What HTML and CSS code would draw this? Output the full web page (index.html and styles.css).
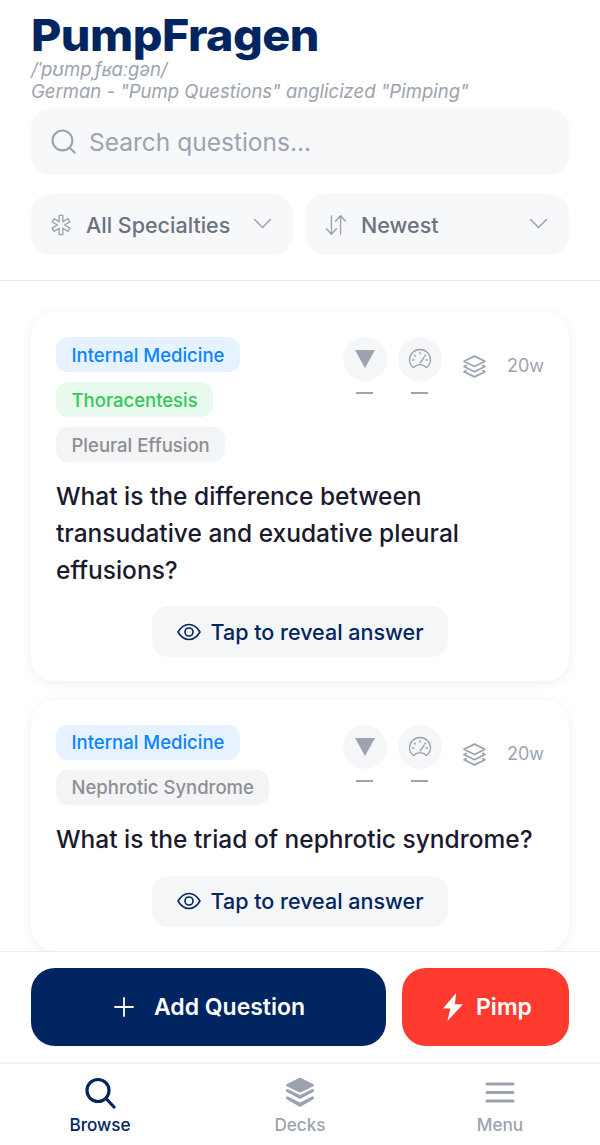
FILE: index.html
```html
<!DOCTYPE html>
<html lang="en">
<head>
    <meta charset="UTF-8">
    <meta name="viewport" content="width=device-width, initial-scale=1.0">
    <title>PumpFragen</title>
    <link rel="stylesheet" href="styles.css">
</head>
<body>
    <div class="app">
        <header class="top">
            <h1 class="logo">PumpFragen</h1>
            <p class="phonetic">/ˈpʊmpˌfʁaːɡən/</p>
            <p class="meaning">German - "Pump Questions" anglicized "Pimping"</p>

            <div class="search">
                <svg class="search-icon" viewBox="0 0 24 24" fill="none" stroke="currentColor" stroke-width="2" stroke-linecap="round"><circle cx="11" cy="11" r="9.500"/><path d="M18 18l4.800 4.800"/></svg>
                <span>Search questions...</span>
            </div>

            <div class="filters">
                <div class="filter">
                    <svg class="filter-icon" viewBox="0 0 24 24" fill="none" stroke="currentColor" stroke-width="1.500" stroke-linejoin="round"><path d="M10 1.500h4v7l5.500-3.500 2.200 3.500L15.900 12l5.800 3.500-2.200 3.500-5.500-3.500v7h-4v-7L4.500 19l-2.200-3.500L8.100 12 2.300 8.500 4.500 5 10 8.500z"/></svg>
                    <span class="filter-label">All Specialties</span>
                    <svg class="chevron" viewBox="0 0 24 24" fill="none" stroke="currentColor" stroke-width="2" stroke-linecap="round" stroke-linejoin="round"><path d="M2 7l10 10L22 7"/></svg>
                </div>
                <div class="filter">
                    <svg class="filter-icon" viewBox="0 0 24 24" fill="none" stroke="currentColor" stroke-width="1.500" stroke-linecap="round" stroke-linejoin="round"><path d="M7 2v20M1.500 16L7 22l5.500-6M17 22V2M11.500 8L17 2l5.500 6"/></svg>
                    <span class="filter-label">Newest</span>
                    <svg class="chevron" viewBox="0 0 24 24" fill="none" stroke="currentColor" stroke-width="2" stroke-linecap="round" stroke-linejoin="round"><path d="M2 7l10 10L22 7"/></svg>
                </div>
            </div>
        </header>

        <main class="feed">
            <article class="card">
                <div class="card-top">
                    <div class="tags">
                        <span class="tag tag-blue">Internal Medicine</span>
                        <span class="tag tag-green">Thoracentesis</span>
                        <span class="tag tag-gray">Pleural Effusion</span>
                    </div>
                    <div class="meta">
                        <div class="stat">
                            <div class="stat-circle"><svg class="triangle" viewBox="0 0 20 18"><path d="M0 0h20L10 18z"/></svg></div>
                            <div class="dash"></div>
                        </div>
                        <div class="stat">
                            <div class="stat-circle"><svg class="gauge" viewBox="0 0 24 24" fill="none" stroke="currentColor" stroke-width="1.300" stroke-linecap="round" stroke-linejoin="round"><path d="M5.500 20.500C3.200 18.800 1.500 16 1.500 13a10.500 10.500 0 0 1 21 0c0 3-1.700 5.800-4 7.500-1.800-1.800-4-2.800-6.500-2.800s-4.700 1-6.500 2.800z"/><path d="M12 16l4-5.500M12 5.500v1.500M6.500 8l1 1M4.500 13H6M19.500 13H18M17.500 8l-1 1"/></svg></div>
                            <div class="dash"></div>
                        </div>
                        <svg class="layers" viewBox="0 0 24 24" fill="none" stroke="currentColor" stroke-width="1.700" stroke-linejoin="round"><path d="M12 2l10 5-10 5L2 7z"/><path d="M4.500 10.500L2 12l10 5 10-5-2.500-1.500"/><path d="M4.500 15.500L2 17l10 5 10-5-2.500-1.500"/></svg>
                        <span class="words">20w</span>
                    </div>
                </div>
                <p class="question">What is the difference between transudative and exudative pleural effusions?</p>
                <button class="reveal">
                    <svg viewBox="0 0 24 24" fill="none" stroke="currentColor" stroke-width="1.600" stroke-linejoin="round"><path d="M1 12c3-5 6.700-7.500 11-7.500S20 7 23 12c-3 5-6.700 7.500-11 7.500S4 17 1 12z"/><circle cx="12" cy="12" r="4"/></svg>
                    Tap to reveal answer
                </button>
            </article>

            <article class="card">
                <div class="card-top">
                    <div class="tags">
                        <span class="tag tag-blue">Internal Medicine</span>
                        <span class="tag tag-gray">Nephrotic Syndrome</span>
                    </div>
                    <div class="meta">
                        <div class="stat">
                            <div class="stat-circle"><svg class="triangle" viewBox="0 0 20 18"><path d="M0 0h20L10 18z"/></svg></div>
                            <div class="dash"></div>
                        </div>
                        <div class="stat">
                            <div class="stat-circle"><svg class="gauge" viewBox="0 0 24 24" fill="none" stroke="currentColor" stroke-width="1.300" stroke-linecap="round" stroke-linejoin="round"><path d="M5.500 20.500C3.200 18.800 1.500 16 1.500 13a10.500 10.500 0 0 1 21 0c0 3-1.700 5.800-4 7.500-1.800-1.800-4-2.800-6.500-2.800s-4.700 1-6.500 2.800z"/><path d="M12 16l4-5.500M12 5.500v1.500M6.500 8l1 1M4.500 13H6M19.500 13H18M17.500 8l-1 1"/></svg></div>
                            <div class="dash"></div>
                        </div>
                        <svg class="layers" viewBox="0 0 24 24" fill="none" stroke="currentColor" stroke-width="1.700" stroke-linejoin="round"><path d="M12 2l10 5-10 5L2 7z"/><path d="M4.500 10.500L2 12l10 5 10-5-2.500-1.500"/><path d="M4.500 15.500L2 17l10 5 10-5-2.500-1.500"/></svg>
                        <span class="words">20w</span>
                    </div>
                </div>
                <p class="question">What is the triad of nephrotic syndrome?</p>
                <button class="reveal">
                    <svg viewBox="0 0 24 24" fill="none" stroke="currentColor" stroke-width="1.600" stroke-linejoin="round"><path d="M1 12c3-5 6.700-7.500 11-7.500S20 7 23 12c-3 5-6.700 7.500-11 7.500S4 17 1 12z"/><circle cx="12" cy="12" r="4"/></svg>
                    Tap to reveal answer
                </button>
            </article>
        </main>

        <div class="actions">
            <button class="add-btn">
                <svg viewBox="0 0 24 24" fill="none" stroke="currentColor" stroke-width="1.800" stroke-linecap="round"><path d="M12 3v18M3 12h18"/></svg>
                Add Question
            </button>
            <button class="pimp-btn">
                <svg viewBox="0 0 16 26" fill="currentColor" preserveAspectRatio="none"><path d="M10.500 0L0 14.500h6L3.500 26 16 10.500H9.500z"/></svg>
                Pimp
            </button>
        </div>

        <nav class="nav">
            <div class="nav-item active">
                <svg viewBox="0 0 32 32" fill="none" stroke="currentColor" stroke-width="3.200" stroke-linecap="round"><circle cx="14" cy="13.500" r="11"/><path d="M22.500 22l7.500 8"/></svg>
                <span>Browse</span>
            </div>
            <div class="nav-item">
                <svg viewBox="0 0 32 32" fill="currentColor"><path d="M16 .5l13.500 6.700q1.500 1-.2 2L16 15.700 2.700 9.200q-1.700-1-.2-2z"/><path d="M3.500 12l12.500 6 12.500-6q3 1.500.8 3L16 22 2.700 15q-2.200-1.500.8-3z"/><path d="M3.500 19.200L16 25.500l12.500-6.300q3 1.500.8 3L16 30 2.700 22.200q-2.200-1.500.8-3z"/></svg>
                <span>Decks</span>
            </div>
            <div class="nav-item">
                <svg viewBox="0 0 32 32" fill="none" stroke="currentColor" stroke-width="3.200" stroke-linecap="round"><path d="M3 7h26M3 15.500h26M3 24h26"/></svg>
                <span>Menu</span>
            </div>
        </nav>
    </div>
</body>
</html>
```

FILE: styles.css
```css
* {
    box-sizing: border-box;
}

body {
    margin: 0;
    background: #fff;
    font-family: Inter, "Liberation Sans", sans-serif;
    color: #1a1a2e;
}

.app {
    height: 1145px;
    display: flex;
    flex-direction: column;
    overflow: hidden;
}

/* header */
.top {
    padding: 12px 31px 25px;
    border-bottom: 1px solid #e9eaec;
}

.logo {
    margin: 0;
    font-size: 44px;
    line-height: 46px;
    font-weight: 800;
    letter-spacing: -0.500px;
    color: #002560;
    transform: scaleX(1.060);
    transform-origin: left;
}

.phonetic,
.meaning {
    margin: 0;
    font-style: italic;
    color: #9ca3af;
    font-size: 18.500px;
    line-height: 22px;
}

.search {
    margin-top: 6px;
    height: 67px;
    padding: 0 20px;
    display: flex;
    align-items: center;
    gap: 13px;
    background: #f7f8fa;
    border-radius: 20px;
    font-size: 24.500px;
    color: #9ca3af;
}

.search-icon {
    width: 25px;
    height: 25px;
    flex: none;
}

.filters {
    margin-top: 19px;
    display: grid;
    grid-template-columns: 262px 1fr;
    gap: 13px;
}

.filter {
    height: 61px;
    padding: 0 21px 0 19px;
    display: flex;
    align-items: center;
    background: #f7f8fa;
    border-radius: 20px;
    color: #9ca3af;
}

.filter-icon {
    width: 22px;
    height: 22px;
    flex: none;
}

.filter-label {
    flex: 1;
    margin-left: 14px;
    padding-top: 1px;
    font-size: 21.500px;
    font-weight: 500;
    color: #6b7280;
}

.chevron {
    width: 19px;
    height: 19px;
    flex: none;
    margin-top: -3px;
}

/* question cards */
.feed {
    flex: 1;
    min-height: 0;
    overflow: hidden;
    padding: 31px 31px 0;
    display: flex;
    flex-direction: column;
    gap: 18.500px;
}

.card {
    flex: none;
    padding: 25px 25px 24px;
    background: #fff;
    border-radius: 24px;
    box-shadow: 0 2px 12px rgba(0, 0, 0, 0.07);
    display: flex;
    flex-direction: column;
}

.card-top {
    display: flex;
    justify-content: space-between;
    align-items: flex-start;
}

.tags {
    display: flex;
    flex-direction: column;
    align-items: flex-start;
    gap: 10px;
}

.tag {
    height: 35px;
    padding: 0 15.500px;
    display: flex;
    align-items: center;
    border-radius: 12px;
    font-size: 18.500px;
    font-weight: 500;
}

.tag-blue {
    background: #e6f2ff;
    color: #0a84ff;
}

.tag-green {
    background: #e8f9ed;
    color: #34c759;
}

.tag-gray {
    background: #f3f4f6;
    color: #8e8e93;
}

.meta {
    display: flex;
    align-items: flex-start;
    color: #9ca3af;
}

.stat {
    width: 44px;
    margin-right: 11px;
    display: flex;
    flex-direction: column;
    align-items: center;
}

.stat-circle {
    width: 44px;
    height: 44px;
    border-radius: 50%;
    background: #f5f6f8;
    display: flex;
    align-items: center;
    justify-content: center;
}

.triangle {
    width: 20px;
    height: 18px;
    fill: #9ca3af;
}

.gauge {
    width: 24px;
    height: 24px;
}

.dash {
    width: 17px;
    height: 2px;
    margin-top: 11px;
    background: #9ca3af;
}

.layers {
    width: 25px;
    height: 25px;
    margin: 17px 20px 0 9px;
}

.words {
    margin-top: 17px;
    font-size: 18px;
    line-height: 24px;
}

.question {
    margin: 16px 0 18px;
    font-size: 24.500px;
    line-height: 36.750px;
    font-weight: 500;
}

.reveal {
    align-self: center;
    height: 51px;
    width: 296px;
    border: none;
    border-radius: 16px;
    background: #f5f6f8;
    display: flex;
    align-items: center;
    justify-content: center;
    gap: 10px;
    font-family: inherit;
    font-size: 21.500px;
    font-weight: 500;
    color: #002560;
}

.reveal svg {
    width: 24px;
    height: 24px;
}

/* bottom */
.actions {
    display: flex;
    gap: 16px;
    padding: 16px 31px;
    background: #fff;
    border-top: 1px solid #eeeff1;
    position: relative;
}

.actions button {
    height: 78px;
    border: none;
    border-radius: 24px;
    color: #fff;
    display: flex;
    align-items: center;
    justify-content: center;
    font-family: inherit;
    font-size: 23px;
    font-weight: 600;
}

.add-btn {
    width: 355px;
    background: #002560;
    gap: 18px;
}

.add-btn svg {
    width: 24px;
    height: 24px;
}

.pimp-btn {
    flex: 1;
    background: #ff3b30;
    gap: 13px;
    padding: 0 0 0 4px;
}

.pimp-btn svg {
    width: 20px;
    height: 28px;
}

.nav {
    height: 83px;
    display: grid;
    grid-template-columns: repeat(3, 1fr);
    border-top: 2px solid #f0f1f3;
}

.nav-item {
    display: flex;
    flex-direction: column;
    align-items: center;
    padding-top: 13px;
    color: #9ca3af;
    font-size: 17.150px;
    font-weight: 500;
    line-height: 20px;
}

.nav-item svg {
    width: 32px;
    height: 32px;
    margin-bottom: 6px;
}

.nav-item.active {
    color: #002560;
}
```
